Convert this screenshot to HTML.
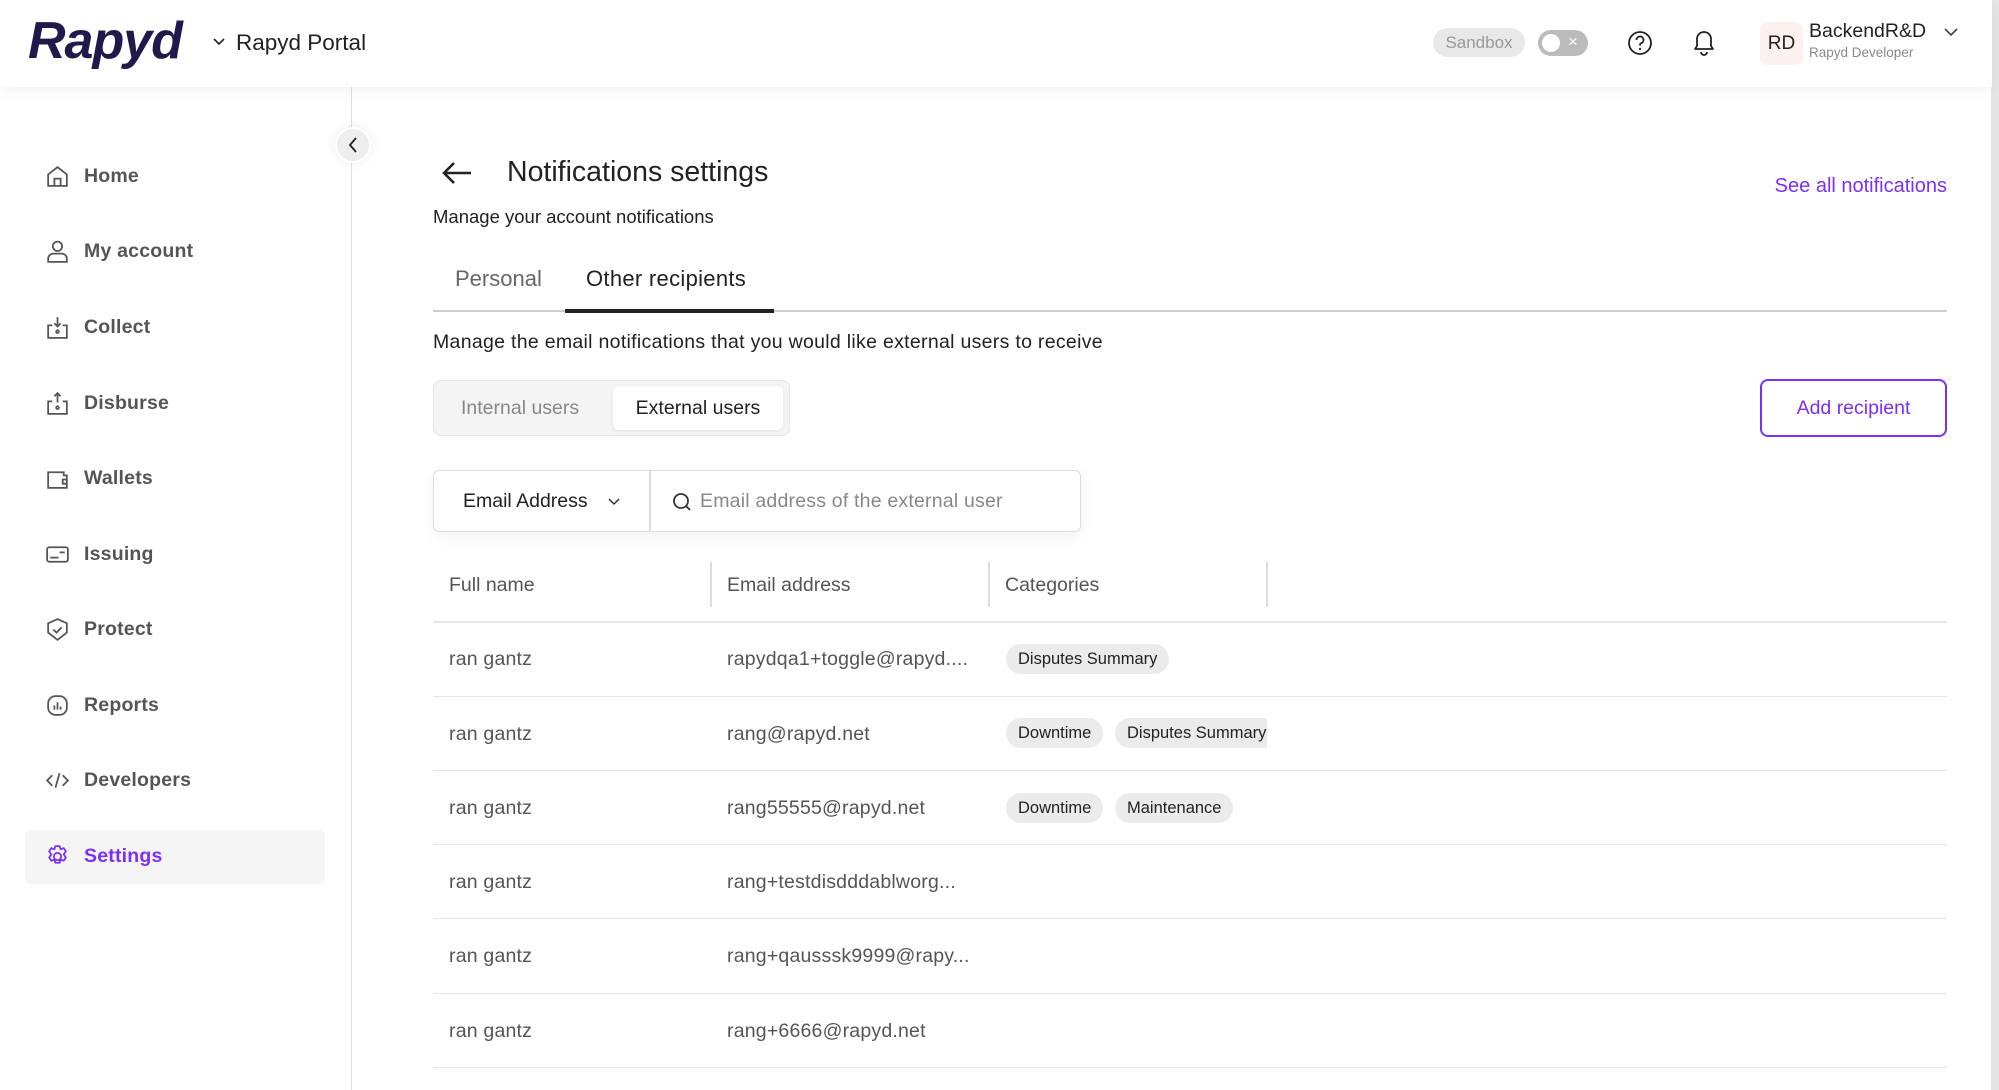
<!DOCTYPE html>
<html><head><meta charset="utf-8"><style>
*{box-sizing:border-box;margin:0;padding:0}
body{width:1999px;height:1090px;overflow:hidden;background:#fff;font-family:"Liberation Sans",sans-serif;color:#222;position:relative}
.a{position:absolute;white-space:nowrap}
.hdr{position:absolute;left:0;top:0;width:1992px;height:87px;background:#fff;box-shadow:0 4px 14px rgba(0,0,0,.05);z-index:2}
.side{position:absolute;left:0;top:87px;width:352px;height:1003px;border-right:1.5px solid #ddd}
.nav{position:absolute;left:44px;font-size:19.5px;color:#555;font-weight:bold;display:flex;align-items:center;letter-spacing:.2px}
.nav svg{width:27px;height:27px;margin-right:13px;fill:none;stroke:#555;stroke-width:1.7}
.sb{position:absolute;right:0;top:0;width:8px;height:1090px;background:#e4e4e4}
.chip{position:absolute;height:30px;line-height:30px;padding:0 12px;background:#ebebeb;border-radius:15px;font-size:16.5px;color:#222}
.row{position:absolute;left:433px;width:1514px;height:1px;background:#e6e6e6}
.cell{position:absolute;font-size:19.5px;color:#555;letter-spacing:.2px}
</style></head><body>
<div class="hdr">
  <div class="a" style="left:28px;top:11px;font-size:52px;font-weight:bold;font-style:italic;color:#1f1a4b;letter-spacing:-1px">Rapyd</div>
  <svg class="a" style="left:212px;top:36px" width="14" height="12" viewBox="0 0 14 12"><path d="M2 3l5 5 5-5" stroke="#222" stroke-width="1.6" fill="none"/></svg>
  <div class="a" style="left:236px;top:30px;font-size:22.5px">Rapyd Portal</div>
  <div class="a" style="left:1433px;top:28px;width:92px;height:29px;border-radius:15px;background:#e8e8e8;color:#999;font-size:17px;line-height:29px;text-align:center">Sandbox</div>
  <div class="a" style="left:1538px;top:30px;width:50px;height:26px;border-radius:13px;background:#bbb"><div style="position:absolute;left:4px;top:4px;width:18px;height:18px;border-radius:9px;background:#fff"></div><div style="position:absolute;left:30px;top:2px;color:#fff;font-size:17px">×</div></div>
  <svg class="a" style="left:1627px;top:30px" width="26" height="26" viewBox="0 0 26 26"><circle cx="13" cy="13" r="11" stroke="#222" stroke-width="1.8" fill="none"/><path d="M9.5 10a3.5 3.5 0 1 1 4.5 3.3c-.7.3-1 .8-1 1.7v.5" stroke="#222" stroke-width="1.8" fill="none"/><circle cx="13" cy="19" r="1.1" fill="#222"/></svg>
  <svg class="a" style="left:1690px;top:28px" width="28" height="30" viewBox="0 0 28 30"><path d="M5 21h18l-2-3v-7a7 7 0 0 0-14 0v7z" stroke="#222" stroke-width="1.8" fill="none" stroke-linejoin="round"/><path d="M11 24a3 3 0 0 0 6 0" stroke="#222" stroke-width="1.8" fill="none"/></svg>
  <div class="a" style="left:1760px;top:22px;width:43px;height:43px;border-radius:8px;background:#fdf1f0;font-size:19px;line-height:43px;text-align:center">RD</div>
  <div class="a" style="left:1809px;top:20px;font-size:19.5px">BackendR&amp;D</div>
  <div class="a" style="left:1809px;top:45px;font-size:13.5px;color:#888">Rapyd Developer</div>
  <svg class="a" style="left:1943px;top:26px" width="16" height="12" viewBox="0 0 16 12"><path d="M2 3l6 6 6-6" stroke="#444" stroke-width="1.6" fill="none"/></svg>
</div>
<div class="side">
  <div class="nav" style="top:76px"><svg viewBox="0 0 26 26"><path d="M4 11l9-7 9 7v11H4z M10 22v-7h6v7"/></svg>Home</div>
  <div class="nav" style="top:151px"><svg viewBox="0 0 26 26"><circle cx="13" cy="8" r="4.5"/><path d="M4 23v-3a5 5 0 0 1 5-5h8a5 5 0 0 1 5 5v3z"/></svg>My account</div>
  <div class="nav" style="top:227px"><svg viewBox="0 0 26 26"><path d="M8 11H4v12h18V11h-4M13 3v9M10 9l3 3 3-3"/><circle cx="13" cy="17" r="1.3"/></svg>Collect</div>
  <div class="nav" style="top:303px"><svg viewBox="0 0 26 26"><path d="M8 11H4v12h18V11h-4M13 12V3M10 6l3-3 3 3"/><circle cx="13" cy="17" r="1.3"/></svg>Disburse</div>
  <div class="nav" style="top:378px"><svg viewBox="0 0 26 26"><path d="M4 7h15v3h3v12H4z M22 14h-4v4h4"/></svg>Wallets</div>
  <div class="nav" style="top:454px"><svg viewBox="0 0 26 26"><rect x="3" y="6" width="20" height="14" rx="2"/><path d="M6 16h8M15 11h5"/></svg>Issuing</div>
  <div class="nav" style="top:529px"><svg viewBox="0 0 26 26"><path d="M13 3l9 4v9l-9 7-9-7V7z M9 13l3 3 5-5"/></svg>Protect</div>
  <div class="nav" style="top:605px"><svg viewBox="0 0 26 26"><rect x="4" y="4" width="18" height="18" rx="7"/><path d="M10 17v-4M13 17v-7M16 17v-3"/></svg>Reports</div>
  <div class="nav" style="top:680px"><svg viewBox="0 0 26 26"><path d="M8 8l-5 5 5 5M18 8l5 5-5 5M15 6l-4 14"/></svg>Developers</div>
  <div class="a" style="left:25px;top:743px;width:300px;height:54px;border-radius:6px;background:#f5f5f5"></div>
  <div class="nav" style="top:756px;color:#7b2ff7"><svg viewBox="0 0 26 26" style="stroke:#7b2ff7"><circle cx="13" cy="13" r="3.5"/><path d="M11 3h4l1 3 3-1 2 3-2 3 2 3-2 3-3-1-1 3h-4l-1-3-3 1-2-3 2-3-2-3 2-3 3 1z"/></svg>Settings</div>
</div>
<div class="a" style="left:335px;top:127px;width:36px;height:36px;border-radius:18px;background:#eee;border:2px solid #fff;box-shadow:0 0 12px rgba(0,0,0,.08)"><svg width="32" height="32" viewBox="0 0 32 32"><path d="M19 9l-6 7 6 7" stroke="#222" stroke-width="1.8" fill="none"/></svg></div>

<svg class="a" style="left:440px;top:159px" width="34" height="28" viewBox="0 0 34 28"><path d="M31 14H4M14 4L4 14l10 10" stroke="#222" stroke-width="2.6" fill="none"/></svg>
<div class="a" style="left:507px;top:156px;font-size:28.5px">Notifications settings</div>
<div class="a" style="left:433px;top:206px;font-size:18.5px">Manage your account notifications</div>
<div class="a" style="right:52px;top:175px;font-size:20px;color:#7b2ff7">See all notifications</div>
<div class="a" style="left:455px;top:266px;font-size:22px;color:#666">Personal</div>
<div class="a" style="left:586px;top:266px;font-size:22px;letter-spacing:.3px">Other recipients</div>
<div class="a" style="left:433px;top:310px;width:1514px;height:2px;background:#ccc"></div>
<div class="a" style="left:565px;top:309px;width:209px;height:4px;background:#222"></div>
<div class="a" style="left:433px;top:331px;font-size:19.5px;letter-spacing:.3px">Manage the email notifications that you would like external users to receive</div>

<div class="a" style="left:433px;top:380px;width:357px;height:56px;border-radius:8px;background:#f4f4f4;border:1px solid #e4e4e4"></div>
<div class="a" style="left:461px;top:397px;font-size:19.5px;color:#888">Internal users</div>
<div class="a" style="left:613px;top:386px;width:170px;height:44px;border-radius:6px;background:#fff;box-shadow:0 1px 4px rgba(0,0,0,.08);font-size:19.5px;line-height:44px;text-align:center">External users</div>
<div class="a" style="left:1760px;top:379px;width:187px;height:58px;border:2px solid #7b2ff7;border-radius:8px;color:#7b2ff7;font-size:19.5px;line-height:54px;text-align:center">Add recipient</div>

<div class="a" style="left:433px;top:470px;width:648px;height:62px;border:1.5px solid #ddd;border-radius:6px;box-shadow:0 4px 16px rgba(0,0,0,.06)"></div>
<div class="a" style="left:649px;top:471px;width:1.5px;height:60px;background:#ddd"></div>
<div class="a" style="left:463px;top:490px;font-size:19.5px">Email Address</div>
<svg class="a" style="left:607px;top:496px" width="14" height="12" viewBox="0 0 14 12"><path d="M2 3l5 5 5-5" stroke="#333" stroke-width="1.5" fill="none"/></svg>
<svg class="a" style="left:671px;top:491px" width="22" height="22" viewBox="0 0 22 22"><circle cx="10" cy="10" r="7" stroke="#333" stroke-width="1.8" fill="none"/><path d="M15 15l4 4" stroke="#333" stroke-width="1.8"/></svg>
<div class="a" style="left:700px;top:490px;font-size:19.5px;color:#888;letter-spacing:.2px">Email address of the external user</div>

<div class="a" style="left:449px;top:574px;font-size:19.5px;color:#555">Full name</div>
<div class="a" style="left:727px;top:574px;font-size:19.5px;color:#555">Email address</div>
<div class="a" style="left:1005px;top:574px;font-size:19.5px;color:#555">Categories</div>
<div class="a" style="left:710px;top:562px;width:1.5px;height:45px;background:#ddd"></div>
<div class="a" style="left:988px;top:562px;width:1.5px;height:45px;background:#ddd"></div>
<div class="a" style="left:1266px;top:562px;width:1.5px;height:45px;background:#ddd"></div>
<div class="row" style="top:621px;height:2px"></div>
<div class="row" style="top:696px"></div><div class="row" style="top:770px"></div><div class="row" style="top:844px"></div><div class="row" style="top:918px"></div><div class="row" style="top:993px"></div><div class="row" style="top:1067px"></div>

<div class="cell" style="left:449px;top:648px">ran gantz</div><div class="cell" style="left:727px;top:648px">rapydqa1+toggle@rapyd....</div>
<div class="chip" style="left:1006px;top:644px">Disputes Summary</div>
<div class="cell" style="left:449px;top:723px">ran gantz</div><div class="cell" style="left:727px;top:723px">rang@rapyd.net</div>
<div class="chip" style="left:1006px;top:718px">Downtime</div>
<div class="a" style="left:1115px;top:718px;width:152px;height:30px;overflow:hidden"><div class="chip" style="left:0;top:0">Disputes Summary</div></div>
<div class="cell" style="left:449px;top:797px">ran gantz</div><div class="cell" style="left:727px;top:797px">rang55555@rapyd.net</div>
<div class="chip" style="left:1006px;top:793px">Downtime</div><div class="chip" style="left:1115px;top:793px">Maintenance</div>
<div class="cell" style="left:449px;top:871px">ran gantz</div><div class="cell" style="left:727px;top:871px">rang+testdisdddablworg...</div>
<div class="cell" style="left:449px;top:945px">ran gantz</div><div class="cell" style="left:727px;top:945px">rang+qausssk9999@rapy...</div>
<div class="cell" style="left:449px;top:1020px">ran gantz</div><div class="cell" style="left:727px;top:1020px">rang+6666@rapyd.net</div>
<div class="sb"></div>
</body></html>
